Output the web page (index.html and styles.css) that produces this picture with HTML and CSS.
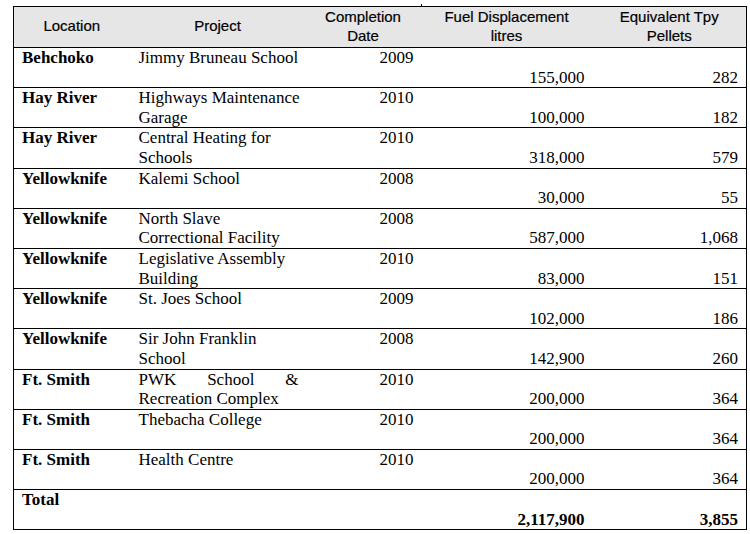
FILE: index.html
```html
<!DOCTYPE html>
<html>
<head>
<meta charset="utf-8">
<link rel="stylesheet" href="styles.css">
</head>
<body>
<table class="fuel">
  <colgroup>
    <col class="c-loc"><col class="c-proj"><col class="c-date"><col class="c-fuel"><col class="c-pel">
  </colgroup>
  <thead>
    <tr>
      <th>Location</th>
      <th>Project</th>
      <th class="tick">Completion<br>Date</th>
      <th>Fuel Displacement<br>litres</th>
      <th>Equivalent Tpy<br>Pellets</th>
    </tr>
  </thead>
  <tbody>
    <tr><td class="loc">Behchoko</td><td class="proj">Jimmy Bruneau School</td><td class="date">2009</td><td class="num">155,000</td><td class="num">282</td></tr>
    <tr><td class="loc">Hay River</td><td class="proj">Highways Maintenance<br>Garage</td><td class="date">2010</td><td class="num">100,000</td><td class="num">182</td></tr>
    <tr><td class="loc">Hay River</td><td class="proj">Central Heating for<br>Schools</td><td class="date">2010</td><td class="num">318,000</td><td class="num">579</td></tr>
    <tr><td class="loc">Yellowknife</td><td class="proj">Kalemi School</td><td class="date">2008</td><td class="num">30,000</td><td class="num">55</td></tr>
    <tr><td class="loc">Yellowknife</td><td class="proj">North Slave<br>Correctional Facility</td><td class="date">2008</td><td class="num">587,000</td><td class="num">1,068</td></tr>
    <tr><td class="loc">Yellowknife</td><td class="proj">Legislative Assembly<br>Building</td><td class="date">2010</td><td class="num">83,000</td><td class="num">151</td></tr>
    <tr><td class="loc">Yellowknife</td><td class="proj">St. Joes School</td><td class="date">2009</td><td class="num">102,000</td><td class="num">186</td></tr>
    <tr><td class="loc">Yellowknife</td><td class="proj">Sir John Franklin<br>School</td><td class="date">2008</td><td class="num">142,900</td><td class="num">260</td></tr>
    <tr><td class="loc">Ft. Smith</td><td class="proj just">PWK School &amp; Recreation Complex</td><td class="date">2010</td><td class="num">200,000</td><td class="num">364</td></tr>
    <tr><td class="loc">Ft. Smith</td><td class="proj">Thebacha College</td><td class="date">2010</td><td class="num">200,000</td><td class="num">364</td></tr>
    <tr><td class="loc">Ft. Smith</td><td class="proj">Health Centre</td><td class="date">2010</td><td class="num">200,000</td><td class="num">364</td></tr>
    <tr class="total"><td class="loc">Total</td><td class="proj"></td><td class="date"></td><td class="num">2,117,900</td><td class="num">3,855</td></tr>
  </tbody>
</table>
</body>
</html>
```
FILE: styles.css
```css
html, body {
  margin: 0;
  padding: 0;
  background: #ffffff;
}
body {
  padding: 6px 0 0 13px;
}
.fuel {
  border-collapse: collapse;
  table-layout: fixed;
  width: 733px;
  border-left: 1px solid #000;
  border-right: 1px solid #000;
  color: #000;
}
.c-loc { width: 116px; }
.c-proj { width: 176px; }
.c-date { width: 115px; }
.c-fuel { width: 172px; }
.c-pel { width: 154px; }

.fuel th {
  background: #e6e6e6;
  font-family: "Liberation Sans", Arial, sans-serif;
  font-weight: normal;
  font-size: 15px;
  line-height: 18.5px;
  height: 39px;
  padding: 0 0 1px 0;
  text-align: center;
  vertical-align: middle;
  border-top: 1px solid #000;
  border-bottom: 1px solid #000;
  color: #000;
  -webkit-text-stroke: 0.2px #000;
}
.fuel th.tick {
  position: relative;
}
.fuel th.tick::after {
  content: "";
  position: absolute;
  right: -1px;
  top: -3px;
  width: 1px;
  height: 3px;
  background: #000;
}
.fuel td {
  font-family: "Liberation Serif", "Times New Roman", serif;
  font-size: 17px;
  line-height: 19.6px;
  height: 39.2px;
  padding: 0;
  border-bottom: 1px solid #000;
  vertical-align: top;
}
.fuel td.loc {
  font-weight: bold;
  padding-left: 8px;
}
.fuel td.proj {
  padding-left: 9px;
  padding-right: 7px;
  white-space: nowrap;
}
.fuel td.proj.just {
  text-align: justify;
  white-space: normal;
}
.fuel td.date {
  text-align: right;
  padding-right: 7px;
}
.fuel td.num {
  text-align: right;
  vertical-align: bottom;
  padding-right: 8px;
}
.fuel tr.total td {
  font-weight: bold;
}
```
